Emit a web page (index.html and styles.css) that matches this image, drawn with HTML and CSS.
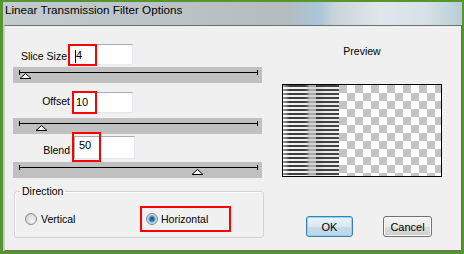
FILE: index.html
```html
<!DOCTYPE html>
<html lang="en">
<head>
  <meta charset="UTF-8" />
  <title>Linear Transmission Filter Options</title>
  <link rel="stylesheet" href="styles.css">
</head>
<body>

  <div class="window">
    <div class="titlebar">Linear Transmission Filter Options</div>

    <div class="panel">
      <div class="controls">

        <div class="field field-slice">
          <span class="field-label">Slice Size</span>
          <div class="entry"><span class="caret"></span>4<span class="mark"></span></div>
        </div>
        <div class="slider slider-slice">
          <svg width="249" height="16" viewBox="0 0 249 16">
            <path d="M6.5 3v5M6 5.5h238.5M244.5 3v5" stroke="#000" fill="none"/>
            <path d="M12.5 6.5l5.5 5h-11z" stroke="#000" fill="#f4f4f4"/>
          </svg>
        </div>

        <div class="field field-offset">
          <span class="field-label">Offset</span>
          <div class="entry">10<span class="mark"></span></div>
        </div>
        <div class="slider slider-offset">
          <svg width="249" height="16" viewBox="0 0 249 16">
            <path d="M6.5 3v5M6 5.5h238.5M244.5 3v5" stroke="#000" fill="none"/>
            <path d="M28.5 7.5l5.5 5h-11z" stroke="#000" fill="#f4f4f4"/>
          </svg>
        </div>

        <div class="field field-blend">
          <span class="field-label">Blend</span>
          <div class="entry">50<span class="mark"></span></div>
        </div>
        <div class="slider slider-blend">
          <svg width="249" height="16" viewBox="0 0 249 16">
            <path d="M6.5 3v5M6 5.5h238.5M244.5 3v5" stroke="#000" fill="none"/>
            <path d="M184.5 7.5l5.5 5h-11z" stroke="#000" fill="#f4f4f4"/>
          </svg>
        </div>

        <fieldset class="group">
          <legend>Direction</legend>
          <div class="radio-row">
            <label class="option option-first"><span class="radio"></span>Vertical</label>
            <label class="option option-marked"><span class="radio radio-on"></span>Horizontal</label>
          </div>
        </fieldset>
      </div>

      <div class="side">
        <div class="preview-label">Preview</div>
        <div class="preview">
          <div class="strip strip-a"></div>
          <div class="strip strip-mid"></div>
          <div class="strip strip-b"></div>
          <div class="checker"></div>
        </div>
        <div class="buttons">
          <button class="btn btn-default">OK</button>
          <button class="btn btn-cancel">Cancel</button>
        </div>
      </div>
    </div>
  </div>

</body>
</html>
```

FILE: styles.css
```css
* {
  box-sizing: border-box;
}
body {
  margin: 0;
  height: 254px;
  overflow: hidden;
  background: #55952f;
  font-family: 'Liberation Sans', Arial, sans-serif;
  font-size: 10.5px;
  color: #000;
}
.window {
  margin: 2px 0 0 3px;
  width: 459px;
  height: 249px;
  background: linear-gradient(to right, #c3cace, #b4bdc2 50%, #c9d6dc 75%, #b3c8d3);
}
.titlebar {
  height: 23px;
  padding: 1px 0 0 2px;
  font-size: 11.7px;
  line-height: 14px;
  white-space: nowrap;
  background: linear-gradient(to right, #c4cbcf 0, #bcc3c7 35%, #b5bcc0 62%, #a9c6d8 69%, #c8d4d9 72%, #dfe7ea 82%, #d6e2e7 92%, #b8ccd6 100%);
}
.panel {
  margin-left: 1px;
  width: 458px;
  height: 226px;
  display: flex;
  background: #f0f0f0;
  border: 1px solid #6e6e6e;
  border-left-color: #c8c8c8;
}
.controls {
  width: 260px;
  padding-left: 8px;
}

/* value rows */
.field {
  display: flex;
  align-items: flex-start;
}
.field-label {
  text-align: right;
  line-height: 13px;
}
.entry {
  position: relative;
  height: 21px;
  background: #fff;
  border: 1px solid;
  border-color: #abadb3 #e3e9ef #e3e9ef #abadb3;
  font-size: 11px;
  line-height: 14px;
  display: flex;
  align-items: flex-start;
}
.caret {
  width: 1px;
  height: 13px;
  margin: 2px 0 0 0;
  background: #000;
}
.mark {
  position: absolute;
  border: 2px solid #f00;
}

.field-slice {
  margin-top: 18px;
}
.field-slice .field-label {
  width: 54px;
  margin-top: 6px;
}
.field-slice .entry {
  margin-left: 1px;
  width: 65px;
  padding: 3px 0 0 6px;
}
.field-slice .mark {
  left: -1px;
  top: -1px;
  width: 29px;
  height: 22px;
}

.field-offset {
  margin-top: 9px;
}
.field-offset .field-label {
  width: 57px;
  margin-top: 3px;
}
.field-offset .entry {
  margin-left: 3px;
  width: 60px;
  padding: 2px 0 0 2px;
}
.field-offset .mark {
  left: -2px;
  top: -2px;
  width: 25px;
  height: 23px;
}

.field-blend {
  margin-top: 2px;
}
.field-blend .field-label {
  width: 57px;
  margin-top: 8px;
}
.field-blend .entry {
  margin-left: 4px;
  width: 61px;
  height: 23px;
  padding: 1px 0 0 4px;
}
.field-blend .mark {
  left: -3px;
  top: -5px;
  width: 29px;
  height: 30px;
}

/* sliders */
.slider {
  width: 249px;
  height: 16px;
  background: #c0c0c0;
}
.slider svg {
  display: block;
}
.slider-slice {
  margin-top: 2px;
}
.slider-offset {
  margin-top: 5px;
}
.slider-blend {
  margin-top: 3px;
}

/* direction group */
.group {
  margin: 7px 0 0 1px;
  width: 250px;
  height: 53px;
  padding: 8px 0 0 0;
  border: 1px solid #d3d3d3;
  border-radius: 3px;
  box-shadow: inset 1px 1px 0 #fff;
}
.group legend {
  margin-left: 5px;
  padding: 0 2px;
  line-height: 13px;
}
.radio-row {
  display: flex;
  align-items: center;
  height: 26px;
  padding-left: 10px;
}
.option {
  display: flex;
  align-items: center;
}
.option-first {
  width: 115px;
}
.option-first .radio {
  margin-right: 4px;
}
.option-marked {
  width: 91px;
  height: 26px;
  padding-left: 4px;
  border: 2px solid #f00;
}
.option-marked .radio {
  margin-right: 3px;
}
.radio {
  width: 12px;
  height: 12px;
  border-radius: 50%;
  border: 1px solid #8c8e8f;
  background: radial-gradient(circle at 60% 65%, #f6f6f6 0, #dcdcdc 55%, #c4c4c4 100%);
}
.radio-on {
  border-color: #7a8a96;
  background: radial-gradient(circle at 50% 50%, #0f4a78 0, #2c78ad 30%, #6fb0d8 45%, #c3d8e6 60%, #e4ebf0 100%);
}

/* preview side */
.side {
  margin-left: 17px;
  width: 160px;
  padding-top: 19px;
}
.preview-label {
  text-align: center;
  line-height: 13px;
}
.preview {
  margin-top: 26px;
  width: 160px;
  height: 93px;
  display: flex;
  border: 1px solid #000;
}
.strip {
  height: 100%;
}
.strip-a {
  width: 26px;
  background:
    linear-gradient(to right, rgba(255,255,255,0.55), rgba(255,255,255,0) 25%, rgba(255,255,255,0) 85%, rgba(190,190,190,0.6)),
    repeating-linear-gradient(to bottom, #3e3e3e 0 2px, #f2f2f2 2px 4px);
}
.strip-mid {
  width: 7px;
  background: repeating-linear-gradient(to bottom, #a8a8a8 0 2px, #d4d4d4 2px 4px);
}
.strip-b {
  width: 23px;
  background:
    linear-gradient(to right, rgba(0,0,0,0.1), rgba(255,255,255,0) 40%),
    repeating-linear-gradient(to bottom, #444 0 2px, #ececec 2px 4px);
}
.checker {
  flex: 1;
  background: conic-gradient(#fff 0 25%, #c4c4c4 0 50%, #fff 0 75%, #c4c4c4 0);
  background-size: 16px 16px;
}
.buttons {
  margin-top: 39px;
  display: flex;
}
.btn {
  height: 21px;
  padding: 0;
  font-family: 'Liberation Sans', Arial, sans-serif;
  font-size: 11px;
  color: #000;
  border: 1px solid #707070;
  border-radius: 3px;
  background: linear-gradient(to bottom, #f4f4f4 0, #ebebeb 50%, #dddddd 50%, #cfcfcf 100%);
  box-shadow: inset 0 0 0 1px #fbfbfb;
}
.btn-default {
  margin-left: 24px;
  width: 47px;
  border-color: #3c7fb1;
  background: linear-gradient(to bottom, #e9f3f9 0, #d9e8f1 50%, #c9dde9 50%, #bdd4e2 100%);
  box-shadow: inset 0 0 0 1px #8fd6f5;
}
.btn-cancel {
  margin-left: 30px;
  width: 49px;
}
```
